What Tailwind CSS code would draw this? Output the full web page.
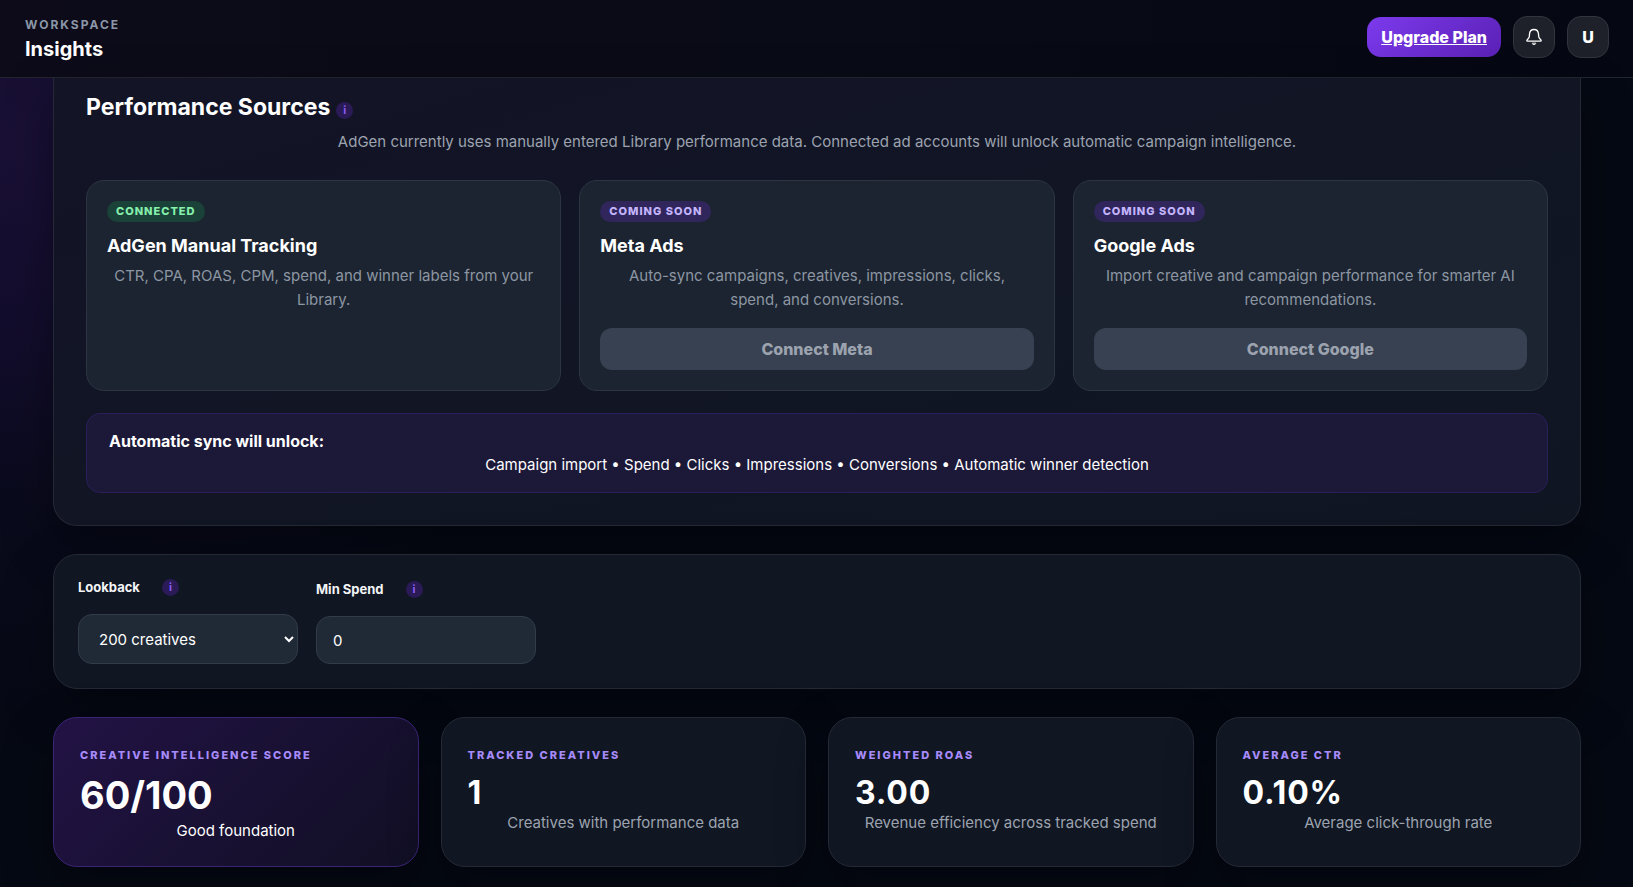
<!DOCTYPE html>
<html lang="en">

<head>
    <meta charset="UTF-8">
    <meta name="viewport" content="width=device-width, initial-scale=1.0">
    <title>Insights</title>
    <script src="https://cdn.jsdelivr.net/npm/@tailwindcss/browser@4"></script>
</head>

<body class="min-h-screen overflow-hidden bg-[#050913] bg-[radial-gradient(circle_at_0px_140px,#1a1036_0px,#130d2d_180px,#090a1b_380px,transparent_620px)] bg-no-repeat font-['Inter',sans-serif] text-base text-white">
    <header class="flex h-[78px] items-center justify-between border-b border-[#23262f] bg-linear-to-r from-[#0d0b19] via-[#090b16] to-[#050812] pr-6 pb-[3px] pl-[25px]">
        <div>
            <p class="text-xs leading-6 font-bold tracking-[2px] text-[#8b97a8]">WORKSPACE</p>
            <h1 class="text-xl leading-6 font-bold">Insights</h1>
        </div>
        <div class="flex items-center gap-3">
            <a href="#" class="rounded-[14px] bg-linear-135 from-[#7c3aed] to-[#5b21b6] px-[14px] py-2 font-extrabold underline">Upgrade Plan</a>
            <button type="button" aria-label="Notifications" class="flex size-[42px] items-center justify-center rounded-[14px] border border-[#32353d] bg-[#1e2129]">
                <svg class="size-[18px]" viewBox="0 0 18 18" fill="none" stroke="currentColor" stroke-width="1.3" stroke-linecap="round" stroke-linejoin="round">
                    <path d="M9 1.500c-2.600 0-4.300 1.900-4.500 4.600l-.2 2.400c-.1 1.300-.8 1.900-1.600 2.700-.6.6-.9.900-.9 1.300 0 .4.300.6.800.6h12.800c.5 0 .8-.2.8-.6 0-.4-.3-.7-.9-1.300-.8-.8-1.500-1.400-1.600-2.700l-.2-2.400C13.300 3.400 11.600 1.500 9 1.500z" />
                    <path d="M7.200 15.400c.4 1.800 3.200 1.800 3.600 0z" fill="currentColor" stroke-width=".6" />
                </svg>
            </button>
            <button type="button" aria-label="Account" class="size-[42px] rounded-[14px] border border-[#32353d] bg-[#1e2129] font-extrabold">U</button>
        </div>
    </header>

    <main class="mr-[52px] ml-[53px] flex flex-col gap-7">
        <section class="rounded-b-3xl border border-t-0 border-[#242935] bg-linear-to-br from-[#131426] to-[#0f1622] px-8 pt-[13px] pb-8 shadow-[0_20px_50px_rgba(0,0,0,0.35)]">
            <h2 class="flex items-center gap-[6px] text-[23px] leading-8 font-bold">Performance Sources
                <button type="button" aria-label="About performance sources" class="mt-[7px] size-[17px] rounded-full bg-[#2a1a56] text-[11px] leading-[17px] font-bold text-[#8b5cf6]">i</button>
            </h2>
            <p class="mt-[7px] text-center text-[15px] leading-6 text-[#9ca3af]">AdGen currently uses manually entered Library performance data. Connected ad accounts will unlock automatic campaign intelligence.</p>

            <div class="mt-[26px] grid grid-cols-3 gap-[18px]">
                <article class="rounded-[18px] border border-[#2c3541] bg-[#1b2430] p-5">
                    <span class="block w-fit rounded-full bg-[#1a4238] px-[9px] text-[11px] leading-[21px] font-extrabold tracking-[1px] text-[#86efac]">CONNECTED</span>
                    <h3 class="mt-[10px] text-lg leading-7 font-bold">AdGen Manual Tracking</h3>
                    <p class="mt-1 text-center text-[15px] leading-6 text-[#8d96a3]">CTR, CPA, ROAS, CPM, spend, and winner labels from your Library.</p>
                </article>
                <article class="rounded-[18px] border border-[#2c3541] bg-[#1b2430] p-5">
                    <span class="block w-fit rounded-full bg-[#30265c] px-[9px] text-[11px] leading-[21px] font-extrabold tracking-[1px] text-[#c4b5fd]">COMING SOON</span>
                    <h3 class="mt-[10px] text-lg leading-7 font-bold">Meta Ads</h3>
                    <p class="mt-1 text-center text-[15px] leading-6 text-[#8d96a3]">Auto-sync campaigns, creatives, impressions, clicks, spend,&nbsp;and conversions.</p>
                    <button type="button" disabled class="mt-4 h-[42px] w-full rounded-xl bg-[#374151] font-extrabold text-[#9ca3af]">Connect Meta</button>
                </article>
                <article class="rounded-[18px] border border-[#2c3541] bg-[#1b2430] p-5">
                    <span class="block w-fit rounded-full bg-[#30265c] px-[9px] text-[11px] leading-[21px] font-extrabold tracking-[1px] text-[#c4b5fd]">COMING SOON</span>
                    <h3 class="mt-[10px] text-lg leading-7 font-bold">Google Ads</h3>
                    <p class="mt-1 text-center text-[15px] leading-6 text-[#8d96a3]">Import creative and campaign performance for smarter AI recommendations.</p>
                    <button type="button" disabled class="mt-4 h-[42px] w-full rounded-xl bg-[#374151] font-extrabold text-[#9ca3af]">Connect Google</button>
                </article>
            </div>

            <div class="mt-[22px] rounded-[14px] border border-[#2a1f5a] bg-[#1c1838] px-[22px] py-[15px] leading-6">
                <strong class="block font-bold">Automatic sync will unlock:</strong>
                <p class="text-center text-[15px] leading-6">Campaign import • Spend • Clicks • Impressions • Conversions • Automatic winner detection</p>
            </div>
        </section>

        <section class="flex items-end gap-[18px] rounded-3xl border border-[#242935] bg-[#101622] px-6 pt-[23px] pb-6 shadow-[0_20px_50px_rgba(0,0,0,0.35)]">
            <div class="w-[220px]">
                <div class="flex items-center gap-[22px]">
                    <label for="lookback" class="text-[13px] leading-[18px] font-bold text-gray-100">Lookback</label>
                    <button type="button" aria-label="About lookback" class="size-[17px] rounded-full bg-[#2a1a56] text-[11px] leading-[17px] font-bold text-[#8b5cf6]">i</button>
                </div>
                <select id="lookback" class="mt-[18px] block h-[50px] w-full rounded-[14px] border border-[#323b48] bg-[#202936] px-4 text-[15px]">
                    <option>200 creatives</option>
                </select>
            </div>
            <div class="w-[220px]">
                <div class="flex items-center gap-[22px]">
                    <label for="min-spend" class="text-[13px] leading-[18px] font-bold text-gray-100">Min Spend</label>
                    <button type="button" aria-label="About min spend" class="size-[17px] rounded-full bg-[#2a1a56] text-[11px] leading-[17px] font-bold text-[#8b5cf6]">i</button>
                </div>
                <input id="min-spend" type="text" value="0" class="mt-[18px] block h-12 w-full rounded-[14px] border border-[#323b48] bg-[#202936] px-4 text-[15px]">
            </div>
        </section>

        <section class="grid grid-cols-4 gap-[22px]">
            <article class="rounded-3xl border border-[#3b2475] bg-linear-135 from-[#221245] to-[#110f24] px-[26px] pt-[29px] pb-[23px] shadow-[0_20px_50px_rgba(0,0,0,0.35)]">
                <p class="text-[11px] leading-4 font-extrabold tracking-[2px] text-[#a78bfa]">CREATIVE INTELLIGENCE SCORE</p>
                <p class="mt-[10px] text-[38px] leading-[44px] font-bold">60/100</p>
                <p class="mt-[2px] text-center text-[15px] leading-6">Good foundation</p>
            </article>
            <article class="rounded-3xl border border-[#242935] bg-[#101622] px-[26px] pt-[29px] pb-[23px] shadow-[0_20px_50px_rgba(0,0,0,0.35)]">
                <p class="text-[11px] leading-4 font-extrabold tracking-[2px] text-[#a78bfa]">TRACKED CREATIVES</p>
                <p class="mt-3 text-[32px] leading-9 font-bold tracking-wide">1</p>
                <p class="text-center text-[15px] leading-6 text-[#9ca3af]">Creatives with performance data</p>
            </article>
            <article class="rounded-3xl border border-[#242935] bg-[#101622] px-[26px] pt-[29px] pb-[23px] shadow-[0_20px_50px_rgba(0,0,0,0.35)]">
                <p class="text-[11px] leading-4 font-extrabold tracking-[2px] text-[#a78bfa]">WEIGHTED ROAS</p>
                <p class="mt-3 text-[32px] leading-9 font-bold tracking-wide">3.00</p>
                <p class="text-center text-[15px] leading-6 text-[#9ca3af]">Revenue efficiency across tracked spend</p>
            </article>
            <article class="rounded-3xl border border-[#242935] bg-[#101622] px-[26px] pt-[29px] pb-[23px] shadow-[0_20px_50px_rgba(0,0,0,0.35)]">
                <p class="text-[11px] leading-4 font-extrabold tracking-[2px] text-[#a78bfa]">AVERAGE CTR</p>
                <p class="mt-3 text-[32px] leading-9 font-bold tracking-wide">0.10%</p>
                <p class="text-center text-[15px] leading-6 text-[#9ca3af]">Average click-through rate</p>
            </article>
        </section>
    </main>
</body>

</html>
